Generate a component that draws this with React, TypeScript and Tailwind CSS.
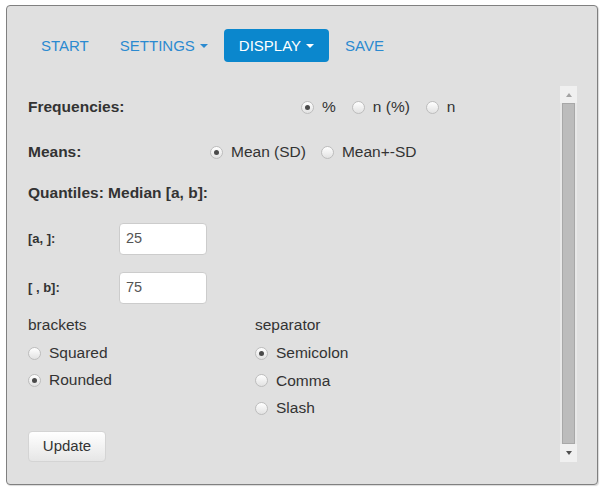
import React from "react";

function Radio({ checked, label }: { checked?: boolean; label: string }) {
  return (
    <div className="flex items-center">
      <span className="relative w-[13px] h-[13px] rounded-full border border-[#bdbdbd] bg-gradient-to-b from-[#ffffff] to-[#e2e2e2] flex items-center justify-center shrink-0">
        {checked && <span className="w-[5px] h-[5px] rounded-full bg-[#4a4a4a]" />}
      </span>
      <span className="ml-[8px] text-[15.5px] leading-5 text-[#333]">{label}</span>
    </div>
  );
}

function Caret() {
  return (
    <span className="inline-block ml-[5px] w-0 h-0 border-t-[4px] border-x-[4px] border-x-transparent border-t-current align-middle" />
  );
}

export default function App() {
  return (
    <div className="min-h-[487px] bg-white pt-[5px] pl-[6px]" style={{ fontFamily: '"Liberation Sans", Arial, sans-serif' }}>
      <div className="w-[592px] h-[480px] border border-[#808080] rounded-[4px] bg-[#e0e0e0] flex flex-col shadow-[1px_1px_1px_rgba(0,0,0,0.15)]">
        {/* nav */}
        <div className="mt-[23px] pl-[19px] flex gap-[1px] h-[33px] text-[15px] leading-[33px]">
          <div className="px-[15px] text-[#2b8ad0] rounded-[4px]">START</div>
          <div className="px-[15px] text-[#2b8ad0] rounded-[4px] flex items-center">SETTINGS<Caret /></div>
          <div className="px-[15px] text-white bg-[#0b87cd] rounded-[4px] flex items-center">DISPLAY<Caret /></div>
          <div className="px-[15px] text-[#2b8ad0] rounded-[4px]">SAVE</div>
        </div>
        {/* scroll area */}
        <div className="mt-[24px] h-[376px] flex">
          <div className="flex-1 pl-[21px] flex flex-col text-[#333]">
            <div className="mt-[11px] flex items-center h-5">
              <div className="w-[273px] font-bold text-[15.5px]">Frequencies:</div>
              <div className="flex gap-[16px]">
                <Radio checked label="%" />
                <Radio label="n (%)" />
                <Radio label="n" />
              </div>
            </div>
            <div className="mt-[25px] flex items-center h-5">
              <div className="w-[182px] font-bold text-[15.5px]">Means:</div>
              <div className="flex gap-[15px]">
                <Radio checked label="Mean (SD)" />
                <Radio label="Mean+-SD" />
              </div>
            </div>
            <div className="mt-[21px] h-5 leading-5 font-bold text-[15.5px]">Quantiles: Median [a, b]:</div>
            <div className="mt-[20px] flex items-center h-[32px]">
              <div className="w-[91px] font-bold text-[13px]">[a, ]:</div>
              <div className="w-[88px] h-[32px] bg-white border border-[#cccccc] rounded-[4px] pl-[6px] flex items-center text-[14.5px] text-[#555]">25</div>
            </div>
            <div className="mt-[17px] flex items-center h-[32px]">
              <div className="w-[91px] font-bold text-[13px]">[ , b]:</div>
              <div className="w-[88px] h-[32px] bg-white border border-[#cccccc] rounded-[4px] pl-[6px] flex items-center text-[14.5px] text-[#555]">75</div>
            </div>
            <div className="mt-[11px] flex">
              <div className="w-[227px] flex flex-col">
                <div className="h-5 leading-5 text-[15.5px]">brackets</div>
                <div className="mt-[8px] flex flex-col gap-[7px]">
                  <Radio label="Squared" />
                  <Radio checked label="Rounded" />
                </div>
              </div>
              <div className="flex flex-col">
                <div className="h-5 leading-5 text-[15.5px]">separator</div>
                <div className="mt-[8px] flex flex-col gap-[7.5px]">
                  <Radio checked label="Semicolon" />
                  <Radio label="Comma" />
                  <Radio label="Slash" />
                </div>
              </div>
            </div>
            <div className="mt-[13px]">
              <div className="w-[78px] h-[31px] rounded-[4px] border border-[#d4d4d4] bg-gradient-to-b from-[#ffffff] to-[#e6e6e6] flex items-center justify-center text-[15px] text-[#333]">Update</div>
            </div>
          </div>
          {/* scrollbar */}
          <div className="w-[17px] mr-[20px] flex flex-col bg-[#e8e8e8]">
            <div className="h-[17px] bg-[#f0f0f0] flex items-center justify-center">
              <span className="w-0 h-0 border-b-[4px] border-x-[3.5px] border-x-transparent border-b-[#a3a3a3]" />
            </div>
            <div className="flex-1 px-[2px]">
              <div className="h-full bg-[#bcbcbc] border border-[#a8a8a8]" />
            </div>
            <div className="h-[18px] bg-[#f0f0f0] flex items-center justify-center">
              <span className="w-0 h-0 border-t-[4px] border-x-[3.5px] border-x-transparent border-t-[#505050]" />
            </div>
          </div>
        </div>
      </div>
    </div>
  );
}
